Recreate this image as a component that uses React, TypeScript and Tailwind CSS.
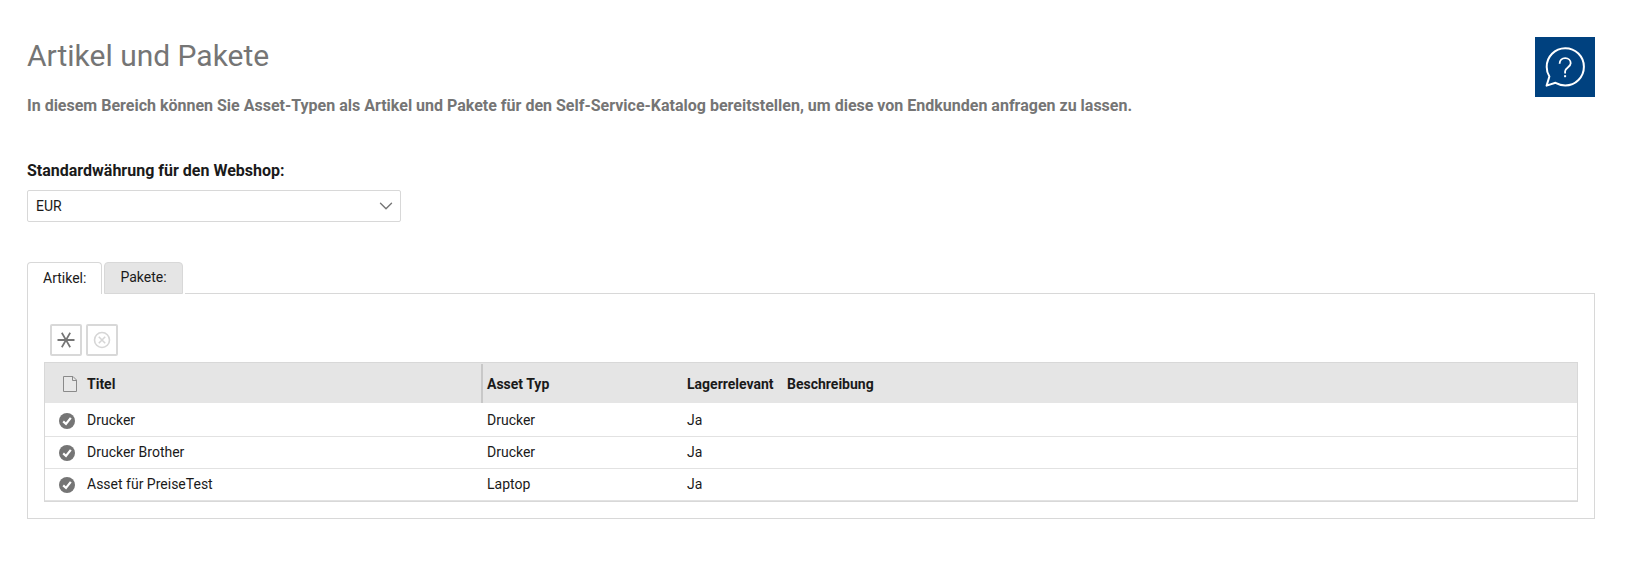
import {useState} from "react";
import {ChevronDown} from "lucide-react";

type Article = {
    id: string;
    title: string;
    assetType: string;
    stock: string;
    description: string;
};

const articles: Article[] = [
    {id: "1", title: "Drucker", assetType: "Drucker", stock: "Ja", description: ""},
    {id: "2", title: "Drucker Brother", assetType: "Drucker", stock: "Ja", description: ""},
    {id: "3", title: "Asset für PreiseTest", assetType: "Laptop", stock: "Ja", description: ""},
];

function HelpIcon() {
    return (
        <svg viewBox="0 0 60 60" className="w-full h-full" fill="none" stroke="white" strokeWidth="2">
            <path d="M14.4 39.5C12.6 36.8 11.7 33.4 11.7 30A18.6 18.6 0 1 1 30.3 48.4C27 48.4 23.5 47.5 20.5 45.8L11.6 48.6Z" strokeLinejoin="round"/>
            <path d="M24.6 26.8C24.6 23.4 27 21.2 30.2 21.2C33.4 21.2 35.7 23.4 35.7 26.3C35.7 30 30.1 30.8 30.1 34.2V36.4" strokeWidth="1.8"/>
            <path d="M30.1 38.2V40.2"/>
        </svg>
    );
}

function NewIcon() {
    return (
        <svg viewBox="0 0 18 18" className="w-[18px] h-[18px]" fill="none" stroke="#757575" strokeWidth="1.7">
            <path d="M0.5 9H17.5" strokeWidth="2"/>
            <path d="M4.8 1.8L13.2 16.2M13.2 1.8L4.8 16.2"/>
        </svg>
    );
}

function RemoveIcon() {
    return (
        <svg viewBox="0 0 18 18" className="w-[18px] h-[18px]" fill="none" stroke="#d6d6d6" strokeWidth="1.6">
            <circle cx="9" cy="9" r="7.5"/>
            <path d="M5.8 5.8L12.2 12.2M12.2 5.8L5.8 12.2"/>
        </svg>
    );
}

function PageIcon() {
    return (
        <svg viewBox="0 0 14 16" className="block w-[14px] h-4" fill="#e8e8e8" stroke="#8a8a8a">
            <path d="M0.5 0.5H10L13.5 4V15.5H0.5Z"/>
            <path d="M9.5 0.5V4.5H13.5" fill="none"/>
        </svg>
    );
}

function CheckIcon() {
    return (
        <svg viewBox="0 0 16 16" className="block w-4 h-4" fill="none">
            <circle cx="8" cy="8" r="8" fill="#757575"/>
            <path d="M4.2 8.4L7 11L11.8 4.8" stroke="white" strokeWidth="2.2"/>
        </svg>
    );
}

function ArticlesTable({rows}: { rows: Article[] }) {
    return (
        <table className="w-full table-fixed border-separate border-spacing-0 border border-[#d8d8d8] text-left">
            <thead>
            <tr className="h-10 [&>th]:bg-[#e5e5e5] [&>th]:px-1 [&>th]:pt-px [&>th]:font-bold">
                <th className="w-[38px]" aria-label="Status">
                    <div className="pl-[14px]"><PageIcon/></div>
                </th>
                <th className="w-[400px]">
                    <div className="flex items-center justify-between -mr-1">
                        Titel
                        <span className="w-[2px] h-[39px] bg-[#c8c8c8]"></span>
                    </div>
                </th>
                <th className="w-[200px]">Asset Typ</th>
                <th className="w-[100px]">Lagerrelevant</th>
                <th>Beschreibung</th>
            </tr>
            </thead>
            <tbody>
            {rows.map((row, idx) => (
                <tr
                    key={row.id}
                    className={`[&>td]:border-b [&>td]:border-[#e2e2e2] [&>td]:px-1 [&>td]:pb-[2px] ${idx === 0 ? "h-[34px] [&>td]:pt-[2px]" : "h-8"}`}
                >
                    <td>
                        <div className="pl-[10px] pt-[2px]"><CheckIcon/></div>
                    </td>
                    <td>{row.title}</td>
                    <td>{row.assetType}</td>
                    <td>{row.stock}</td>
                    <td>{row.description}</td>
                </tr>
            ))}
            </tbody>
        </table>
    );
}

export default function App() {
    const [currency, setCurrency] = useState("EUR");
    const [tab, setTab] = useState("articles");

    const tabClass = (name: string) =>
        `h-8 px-[15px] pb-[2px] border border-[#d8d8d8] rounded-t ${tab === name ? "border-b-0 bg-white" : "bg-[#e5e5e5]"}`;

    return (
        <main className="pl-[27px] pr-[31px] pt-[37px] pb-10 bg-white text-[#1a1a1a] text-sm leading-5 font-['Roboto',sans-serif]">
            <header className="flex items-start justify-between">
                <div className="text-[#757575]">
                    <h1 className="text-3xl leading-[38px]">Artikel und Pakete</h1>
                    <p className="mt-[19px] text-base font-bold">
                        In diesem Bereich können Sie Asset-Typen als Artikel und Pakete für den Self-Service-Katalog
                        bereitstellen, um diese von Endkunden anfragen zu lassen.
                    </p>
                </div>
                <button className="w-[60px] h-[60px] shrink-0 bg-[#00417f]" aria-label="Hilfe">
                    <HelpIcon/>
                </button>
            </header>

            <label htmlFor="currency" className="block mt-[41px] text-base font-bold">
                Standardwährung für den Webshop:
            </label>
            <div className="relative mt-[7px] w-full max-w-[374px]">
                <select
                    id="currency"
                    value={currency}
                    onChange={(e) => setCurrency(e.target.value)}
                    className="block w-full h-8 pl-2 pr-8 appearance-none bg-white border border-[#d8d8d8] rounded-xs"
                >
                    <option value="EUR">EUR</option>
                    <option value="USD">USD</option>
                    <option value="CHF">CHF</option>
                </select>
                <ChevronDown className="absolute right-1 top-[5px] w-[22px] h-[22px] text-[#757575] pointer-events-none" strokeWidth={1.5}/>
            </div>

            <div className="flex gap-[2px] mt-10" role="tablist">
                <button role="tab" aria-selected={tab === "articles"} className={tabClass("articles")} onClick={() => setTab("articles")}>
                    Artikel:
                </button>
                <button role="tab" aria-selected={tab === "packages"} className={tabClass("packages")} onClick={() => setTab("packages")}>
                    Pakete:
                </button>
                <div className="flex-1 border-b border-[#d8d8d8]"></div>
            </div>
            <section className="px-4 pt-[30px] pb-4 border border-t-0 border-[#d8d8d8]">
                <div className="flex gap-1 pl-[6px] mb-[6px]">
                    <button className="flex items-center justify-center w-8 h-8 border-2 border-[#d8d8d8] rounded-xs" aria-label="Neu">
                        <NewIcon/>
                    </button>
                    <button className="flex items-center justify-center w-8 h-8 border-2 border-[#d8d8d8] rounded-xs" aria-label="Entfernen" disabled>
                        <RemoveIcon/>
                    </button>
                </div>
                <ArticlesTable rows={tab === "articles" ? articles : []}/>
            </section>
        </main>
    );
}
